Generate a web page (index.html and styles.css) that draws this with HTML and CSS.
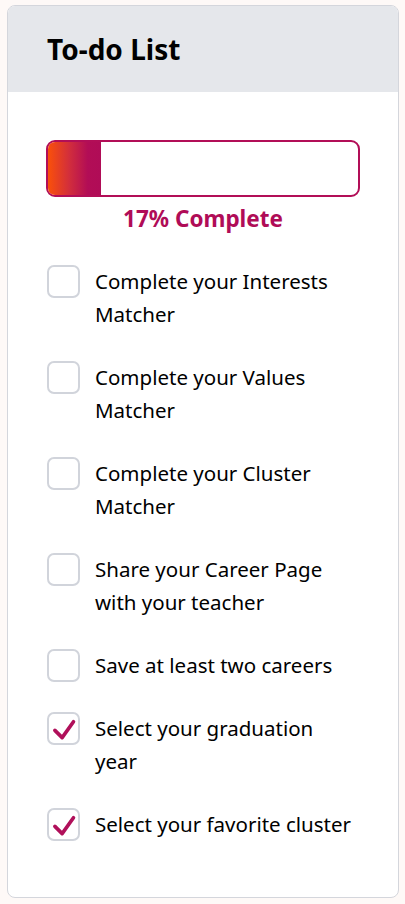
FILE: index.html
```html
<!DOCTYPE html>
<html lang="en">
<head>
<meta charset="utf-8">
<title>To-do List</title>
<link rel="stylesheet" href="styles.css">
</head>
<body>
<div class="card">
  <div class="card-header"><h1 class="title">To-do List</h1></div>
  <div class="card-body">
    <div class="progress"><div class="progress-fill" style="width:17%"></div></div>
    <div class="progress-label">17% Complete</div>
    <ul class="todo">
      <li class="item"><span class="box"></span><span class="text">Complete your Interests Matcher</span></li>
      <li class="item"><span class="box"></span><span class="text">Complete your Values Matcher</span></li>
      <li class="item"><span class="box"></span><span class="text">Complete your Cluster Matcher</span></li>
      <li class="item"><span class="box"></span><span class="text">Share your Career Page with your teacher</span></li>
      <li class="item"><span class="box"></span><span class="text">Save at least two careers</span></li>
      <li class="item"><span class="box checked"><svg viewBox="0 0 32 32" width="32" height="32"><path d="M6.5 17.5 L14.5 25.5 L27 8" fill="none" stroke="#b0105a" stroke-width="4" stroke-linecap="round" stroke-linejoin="round"/></svg></span><span class="text">Select your graduation year</span></li>
      <li class="item"><span class="box checked"><svg viewBox="0 0 32 32" width="32" height="32"><path d="M6.5 17.5 L14.5 25.5 L27 8" fill="none" stroke="#b0105a" stroke-width="4" stroke-linecap="round" stroke-linejoin="round"/></svg></span><span class="text">Select your favorite cluster</span></li>
    </ul>
  </div>
</div>
</body>
</html>
```
FILE: styles.css
```css
* { box-sizing: border-box; }
html, body { margin: 0; padding: 0; }
body {
  background: #fef9f7;
  font-family: "Noto Sans", "Open Sans", sans-serif;
  color: #000;
}
.card {
  margin: 5px 6px 0 7px;
  width: 392px;
  height: 893px;
  background: #fff;
  border: 1px solid #d4d6dc;
  border-radius: 8px;
  overflow: hidden;
}
.card-header {
  background: #e5e7eb;
  height: 86px;
  padding-left: 39px;
  display: flex;
  align-items: center;
}
.title {
  margin: 0;
  font-size: 28px;
  font-weight: 700;
  line-height: 34px;
}
.card-body {
  padding: 48px 38px 0 38px;
}
.progress {
  height: 57px;
  border: 2px solid #b20e57;
  border-radius: 9px;
  overflow: hidden;
  display: flex;
}
.progress-fill {
  height: 100%;
  background: linear-gradient(to right, #fa500a 0%, #d22e3c 40%, #b20d56 75%, #b00c57 100%);
}
.progress-label {
  margin-top: 6px;
  text-align: center;
  color: #b00c57;
  font-size: 22.5px;
  font-weight: 700;
  line-height: 32px;
}
.todo {
  list-style: none;
  margin: 30px 0 0 0;
  padding: 0;
  display: flex;
  flex-direction: column;
  gap: 30px;
}
.item {
  display: flex;
  align-items: flex-start;
  gap: 15px;
}
.box {
  flex: none;
  width: 33px;
  height: 33px;
  margin-left: 1px;
  border: 2px solid #d1d4db;
  border-radius: 7px;
  display: flex;
  align-items: center;
  justify-content: center;
}
.box svg { display: block; }
.text {
  font-size: 20.5px;
  line-height: 33px;
}
```
